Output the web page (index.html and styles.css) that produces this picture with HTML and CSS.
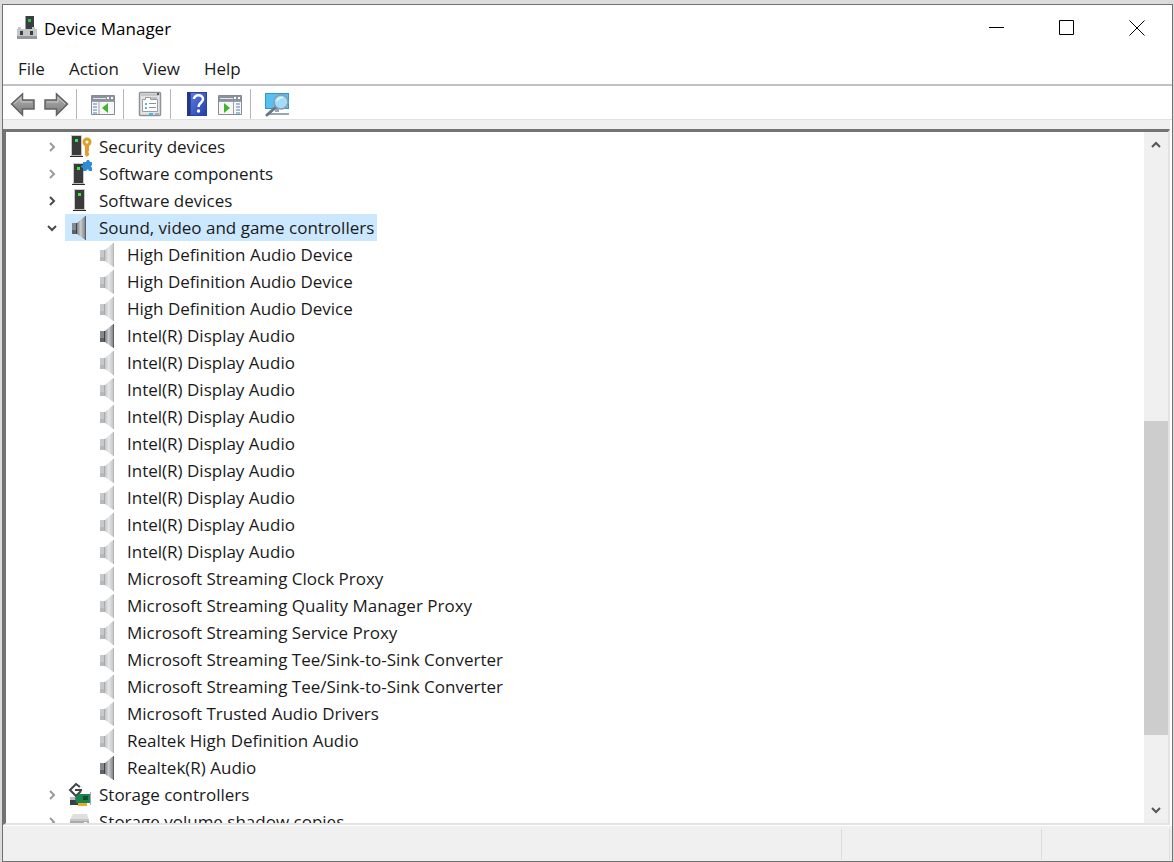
FILE: index.html
```html
<!DOCTYPE html>
<html lang="en">
<head>
  <meta charset="utf-8">
  <title>Device Manager</title>
  <link rel="stylesheet" href="styles.css">
</head>
<body>
<!-- shared icons -->
<svg class="sprite" aria-hidden="true">
  <defs>
    <linearGradient id="metal" x1="0" x2="1" y1="0" y2="0">
      <stop offset="0" stop-color="#7c8084"/><stop offset=".4" stop-color="#c9cccf"/><stop offset="1" stop-color="#74787c"/>
    </linearGradient>
    <linearGradient id="arrow" x1="0" x2="0" y1="0" y2="1">
      <stop offset="0" stop-color="#b4b4b4"/><stop offset="1" stop-color="#7a7a7a"/>
    </linearGradient>
    <linearGradient id="book" x1="0" x2="1" y1="0" y2="1">
      <stop offset="0" stop-color="#5a7ae0"/><stop offset="1" stop-color="#2440a8"/>
    </linearGradient>
    <symbol id="speaker" viewBox="0 0 24 24">
      <path d="M4 7h4v11H4z" fill="#868a8e"/>
      <path d="M4 14h4v4H4z" fill="#5f6367"/>
      <path d="M8 7h1v11H8z" fill="#3f4347"/>
      <path d="M9 7l7-6 2-1v24l-2-1-7-5z" fill="url(#metal)"/>
      <path d="M17 0h1v24h-1z" fill="#5c6064"/>
    </symbol>
    <symbol id="tower" viewBox="0 0 24 24">
      <path d="M6 0h11v20H6z" fill="#c9c9c9"/>
      <path d="M7 1h9v19H7z" fill="#3b3b3b"/>
      <path d="M10 4h3v3h-3z" fill="#37ee3a"/>
      <path d="M6 20h11l1 2H5z" fill="#b9b9b9"/>
      <path d="M5 21h13v1H5z" fill="#292929"/>
    </symbol>
    <symbol id="chevron" viewBox="0 0 10 10">
      <path d="M3 1l4 4-4 4" fill="none" stroke="currentColor" stroke-width="2"/>
    </symbol>
  </defs>
</svg>

<div class="window">
  <header class="titlebar">
    <svg class="app-icon" viewBox="0 0 24 24">
      <path d="M9 0h9v13H9z" fill="#3a3e40"/><path d="M9 0h1v13H9z" fill="#9b9fa1"/><path d="M12 3h3v3h-3z" fill="#35bd4b"/>
      <path d="M2 11h3v2h11v-2h3v2h2v10H1V13h1z" fill="#c4c6c8"/>
      <path d="M1 20h20v3H1z" fill="#96999b"/>
      <path d="M4 15h3v4H4zM14 15h3v4h-3z" fill="#3a3e40"/>
    </svg>
    <h1>Device Manager</h1>
    <div class="window-buttons">
      <button aria-label="Minimize"><svg viewBox="0 0 16 16"><path d="M0 8.5h15"/></svg></button>
      <button aria-label="Maximize"><svg viewBox="0 0 16 16"><path d="M.5 1.5h14v14H.5z"/></svg></button>
      <button aria-label="Close"><svg viewBox="0 0 16 16"><path d="M.5 1.5l15 15M15.5 1.5l-15 15"/></svg></button>
    </div>
  </header>

  <nav class="menubar">
    <button>File</button>
    <button>Action</button>
    <button>View</button>
    <button>Help</button>
  </nav>

  <div class="toolbar">
    <button aria-label="Back"><svg viewBox="0 0 26 26"><path d="M1.5 13L12.500 3v6H24v9H12.500v6z" fill="url(#arrow)" stroke="#626262" stroke-width="1.5"/><path d="M4 13l7-6.500V11h11" fill="none" stroke="#c8c8c8"/></svg></button>
    <button aria-label="Forward"><svg viewBox="0 0 26 26"><path d="M24.500 13L13.500 3v6H2v9h11.500v6z" fill="url(#arrow)" stroke="#626262" stroke-width="1.5"/><path d="M4 11h11V6.500l7 6.500" fill="none" stroke="#c8c8c8"/></svg></button>
    <span class="sep"></span>
    <button aria-label="Show console tree"><svg viewBox="0 0 26 26">
      <path d="M1.5 4.5h23v19h-23z" fill="#f7f7f7" stroke="#858b94"/><path d="M2 5h22v5H2z" fill="#8b929b"/>
      <path d="M3 7h13v1H3z" fill="#e4e7ea"/><path d="M17 6h2v2h-2zM21 6h2v2h-2z" fill="#fff"/>
      <path d="M9 10v13M2 10.5h22" stroke="#9ba1a8"/><path d="M3 13h4M3 16h4M3 19h4M3 22h4" stroke="#4c83bd"/>
      <path d="M18 12v10l-6-5z" fill="#3eb52c"/></svg></button>
    <span class="sep"></span>
    <button aria-label="Properties"><svg viewBox="0 0 26 26">
      <rect x="2.5" y="1.5" width="21" height="23" rx="1" fill="#e4e4e4" stroke="#8d9298" stroke-width="1.5"/><path d="M4 4h18" stroke="#a3a8ad"/><path d="M20 2h2v2h-2z" fill="#555"/>
      <path d="M5.5 8.5h3v-2h5v2h7v12h-15z" fill="#fff" stroke="#989da3"/><path d="M14 7h6" stroke="#989da3"/>
      <path d="M8 12h2v2H8zM8 16h2v2H8z" fill="#4cb9dd"/><path d="M12 12.5h7M12 16.5h7" stroke="#8a9097"/>
      <path d="M12 22h4v2h-4z" fill="#35c2e8"/><path d="M18 22h4v2h-4z" fill="#a9aeb3"/></svg></button>
    <span class="sep"></span>
    <button aria-label="Help"><svg viewBox="0 0 26 26">
      <path d="M3 1h20v24H3z" fill="#2743a4"/><path d="M7 2h15v22H7z" fill="url(#book)"/><path d="M3 1h3v24H3z" fill="#223880"/>
      <path d="M10 8c0-5 9-5 9 0 0 4-4.500 3.500-4.500 8" fill="none" stroke="#fff" stroke-width="2.500"/><circle cx="14.500" cy="20" r="1.700" fill="#fff"/></svg></button>
    <button aria-label="Show action pane"><svg viewBox="0 0 26 26">
      <path d="M1.5 4.5h23v19h-23z" fill="#f7f7f7" stroke="#858b94"/><path d="M2 5h22v5H2z" fill="#8b929b"/>
      <path d="M3 7h13v1H3z" fill="#e4e7ea"/><path d="M17 6h2v2h-2zM21 6h2v2h-2z" fill="#fff"/>
      <path d="M16.500 10v13M2 10.5h22" stroke="#9ba1a8"/><path d="M19 13h4M19 16h4M19 19h4M19 22h4" stroke="#4c83bd"/>
      <path d="M7 12v10l6-5z" fill="#3eb52c"/></svg></button>
    <span class="sep"></span>
    <button aria-label="Scan for hardware changes"><svg viewBox="0 0 26 26">
      <path d="M1 2h24v16H1z" fill="#2f95cf"/><path d="M2 3h22v14H2z" fill="#58c0f0"/>
      <path d="M11 18h4v3h-4z" fill="#9ba8b1"/><path d="M3 22h22v2H3z" fill="#93a9b8"/>
      <path d="M12 16L3 24" stroke="#697681" stroke-width="3" stroke-linecap="round"/>
      <circle cx="17" cy="11" r="7" fill="#a3dcf8" stroke="#8a9ca8" stroke-width="1.5"/><path d="M13 10c1-3 4-4 6-3" fill="none" stroke="#e5f7ff" stroke-width="1.5"/></svg></button>
  </div>

  <main class="pane">
    <ul class="tree">
      <li><div class="row"><svg class="twisty"><use href="#chevron"/></svg><svg class="icon" viewBox="0 0 24 24"><use href="#tower" x="-3"/><path d="M17 10v10l2 2 2-2v-2l-1-1 1-1v-6z" fill="#dda02d"/><circle cx="19" cy="7" r="3" fill="#fff" stroke="#dda02d" stroke-width="3"/></svg>Security devices</div></li>
      <li><div class="row"><svg class="twisty"><use href="#chevron"/></svg><svg class="icon" viewBox="0 0 24 24"><use href="#tower" x="-1" y="1"/><path d="M15 0h3l1-2h2l1 2h2v3l-1 1 1 2v3h-3l-1-2-2 2h-3V6l-2-1V4l2-1z" fill="#2e8cd6"/></svg>Software components</div></li>
      <li><div class="row"><svg class="twisty dark"><use href="#chevron"/></svg><svg class="icon"><use href="#tower"/></svg>Software devices</div></li>
      <li>
        <div class="row selected"><svg class="twisty dark open"><use href="#chevron"/></svg><svg class="icon"><use href="#speaker"/></svg>Sound, video and game controllers</div>
        <ul>
          <li class="row ghost"><svg class="icon"><use href="#speaker"/></svg>High Definition Audio Device</li>
          <li class="row ghost"><svg class="icon"><use href="#speaker"/></svg>High Definition Audio Device</li>
          <li class="row ghost"><svg class="icon"><use href="#speaker"/></svg>High Definition Audio Device</li>
          <li class="row"><svg class="icon"><use href="#speaker"/></svg>Intel(R) Display Audio</li>
          <li class="row ghost"><svg class="icon"><use href="#speaker"/></svg>Intel(R) Display Audio</li>
          <li class="row ghost"><svg class="icon"><use href="#speaker"/></svg>Intel(R) Display Audio</li>
          <li class="row ghost"><svg class="icon"><use href="#speaker"/></svg>Intel(R) Display Audio</li>
          <li class="row ghost"><svg class="icon"><use href="#speaker"/></svg>Intel(R) Display Audio</li>
          <li class="row ghost"><svg class="icon"><use href="#speaker"/></svg>Intel(R) Display Audio</li>
          <li class="row ghost"><svg class="icon"><use href="#speaker"/></svg>Intel(R) Display Audio</li>
          <li class="row ghost"><svg class="icon"><use href="#speaker"/></svg>Intel(R) Display Audio</li>
          <li class="row ghost"><svg class="icon"><use href="#speaker"/></svg>Intel(R) Display Audio</li>
          <li class="row ghost"><svg class="icon"><use href="#speaker"/></svg>Microsoft Streaming Clock Proxy</li>
          <li class="row ghost"><svg class="icon"><use href="#speaker"/></svg>Microsoft Streaming Quality Manager Proxy</li>
          <li class="row ghost"><svg class="icon"><use href="#speaker"/></svg>Microsoft Streaming Service Proxy</li>
          <li class="row ghost"><svg class="icon"><use href="#speaker"/></svg>Microsoft Streaming Tee/Sink-to-Sink Converter</li>
          <li class="row ghost"><svg class="icon"><use href="#speaker"/></svg>Microsoft Streaming Tee/Sink-to-Sink Converter</li>
          <li class="row ghost"><svg class="icon"><use href="#speaker"/></svg>Microsoft Trusted Audio Drivers</li>
          <li class="row ghost"><svg class="icon"><use href="#speaker"/></svg>Realtek High Definition Audio</li>
          <li class="row"><svg class="icon"><use href="#speaker"/></svg>Realtek(R) Audio</li>
        </ul>
      </li>
      <li><div class="row"><svg class="twisty"><use href="#chevron"/></svg><svg class="icon" viewBox="0 0 24 24">
        <path d="M2 14h12v8H2z" fill="#3b3f41"/><path d="M2 14h12v3H2z" fill="#bcbfc1"/>
        <path d="M12 4L8 1 2 7l6 6 5-5M7 7h7" fill="none" stroke="#3f4345" stroke-width="2"/>
        <path d="M7 15l4-4h11v9H8z" fill="#16854f"/><path d="M15 13h5v4h-5z" fill="#154b33"/><path d="M22.500 9v13" stroke="#a5a9ab"/><path d="M10 20h9v3h-9z" fill="#f2aa20"/></svg>Storage controllers</div></li>
      <li><div class="row"><svg class="twisty"><use href="#chevron"/></svg><svg class="icon" viewBox="0 0 24 24"><path d="M5 4h14l2 6H2z" fill="#dedfe0"/><path d="M2 9h19v9H2z" fill="#a9abad"/><path d="M2 9h19v2H2z" fill="#c5c7c9"/><path d="M16 12h3v2h-3z" fill="#fff"/></svg>Storage volume shadow copies</div></li>
    </ul>
    <div class="scrollbar">
      <button aria-label="Scroll up"><svg class="up"><use href="#chevron"/></svg></button>
      <div class="track"><div class="before"></div><div class="thumb"></div><div class="after"></div></div>
      <button aria-label="Scroll down"><svg class="down"><use href="#chevron"/></svg></button>
    </div>
  </main>

  <footer class="statusbar"><span></span><span></span><span></span></footer>
</div>
</body>
</html>
```
FILE: styles.css
```css
*{box-sizing:border-box;}
html,body{height:100%;}
body,h1,ul{margin:0;padding:0;}
ul{list-style:none;}
body{padding:4px 1px 0 2px;background:#dcdcdc;color:#1a1a1a;font-family:"Open Sans","Noto Sans",sans-serif;font-size:17px;}
button{margin:0;padding:0;border:0;background:none;color:inherit;font:inherit;}
svg{display:block;flex:none;}
.sprite{position:absolute;width:0;height:0;}

.window{display:flex;flex-direction:column;height:100%;border:1px solid #707070;background:#fff;}
.titlebar{display:flex;align-items:center;height:46px;padding-left:13px;}
.app-icon{width:24px;height:24px;margin-right:4px;}
h1{font-size:17px;font-weight:400;color:#000;}
.window-buttons{display:flex;align-self:flex-start;margin-left:auto;}
.window-buttons button{display:flex;align-items:center;justify-content:center;width:70px;height:43px;}
.window-buttons svg{width:16px;height:16px;fill:none;stroke:#000;overflow:visible;}

.menubar{display:flex;height:35px;padding:2px 0 0 3px;border-bottom:2px solid #bfc2c6;}
.menubar button{padding:0 12px;}

.toolbar{display:flex;align-items:center;height:34px;padding:2px 0 0 7px;border-bottom:1px solid #e2e2e2;}
.toolbar button{margin-right:7px;}
.toolbar svg{width:26px;height:26px;}
.sep{width:1px;height:30px;margin-right:13px;background:#b5b5b5;}

.pane{display:flex;flex:1;min-height:0;margin:9px 2px 0 0;border:solid #747474;border-width:3px 2px 2px 3px;border-right-color:#e3e3e3;border-bottom-color:#e3e3e3;background:#fff;box-shadow:0 -9px #f0f0f0;}
.tree{flex:1;overflow:hidden;padding:1px 0 0 41px;}
.tree ul{padding-left:46px;}
.row{display:flex;align-items:center;width:fit-content;height:27px;padding-right:3px;white-space:nowrap;}
.twisty{width:10px;height:10px;margin-right:8px;color:#9a9a9a;}
.dark{color:#4a4a4a;}
.open{transform:rotate(90deg);}
.icon{width:24px;height:24px;margin:0 7px 0 3px;overflow:visible;}
.selected{background:linear-gradient(to right,transparent 18px,#cce8ff 18px);}
.ghost .icon{opacity:.45;}

.scrollbar{display:flex;flex-direction:column;width:24px;background:#f0f0f0;}
.scrollbar button{display:flex;align-items:center;justify-content:center;height:26px;color:#555;}
.scrollbar svg{width:10px;height:10px;}
.up{transform:rotate(-90deg);}
.down{transform:rotate(90deg);}
.track{display:flex;flex:1;flex-direction:column;}
.before{flex:263;}
.thumb{flex:314;background:#cdcdcd;}
.after{flex:62;}

.statusbar{display:flex;height:36px;padding:3px 2px 1px 0;border-top:1px solid #fff;background:#f0f0f0;}
.statusbar span{width:200px;border-right:1px solid #dcdcdc;}
.statusbar span:first-child{flex:1;}
.statusbar span:last-child{width:128px;}
```
